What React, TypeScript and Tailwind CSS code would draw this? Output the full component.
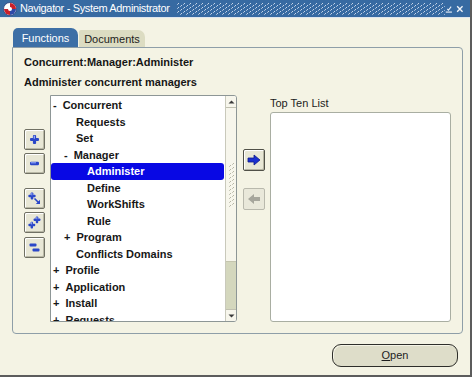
import React from "react";

type Row = { text: string; lvl: number; sign?: "-" | "+"; selected?: boolean };

const rows: Row[] = [
  { text: "Concurrent", lvl: 0, sign: "-" },
  { text: "Requests", lvl: 1 },
  { text: "Set", lvl: 1 },
  { text: "Manager", lvl: 1, sign: "-" },
  { text: "Administer", lvl: 2, selected: true },
  { text: "Define", lvl: 2 },
  { text: "WorkShifts", lvl: 2 },
  { text: "Rule", lvl: 2 },
  { text: "Program", lvl: 1, sign: "+" },
  { text: "Conflicts Domains", lvl: 1 },
  { text: "Profile", lvl: 0, sign: "+" },
  { text: "Application", lvl: 0, sign: "+" },
  { text: "Install", lvl: 0, sign: "+" },
  { text: "Requests", lvl: 0, sign: "+" },
];

const BLUE = "#2b47c8";

function PlusShape({ x, y, s = 1 }: { x: number; y: number; s?: number }) {
  return (
    <g transform={`translate(${x} ${y}) scale(${s})`}>
      <rect x={-1.6} y={-4.5} width={3.2} height={9} rx={1} fill={BLUE} />
      <rect x={-4.5} y={-1.6} width={9} height={3.2} rx={1} fill={BLUE} />
      <rect x={-0.8} y={-3.8} width={1.2} height={3} fill="#9fb4ff" />
    </g>
  );
}
function MinusShape({ x, y }: { x: number; y: number }) {
  return (
    <g transform={`translate(${x} ${y})`}>
      <rect x={-4.5} y={-1.7} width={9} height={3.4} rx={1.2} fill={BLUE} />
      <rect x={-3.5} y={-1.2} width={5} height={1} fill="#9fb4ff" />
    </g>
  );
}

function ToolBtn({ children, className = "" }: { children: React.ReactNode; className?: string }) {
  return (
    <div
      className={`w-[21px] h-[21px] rounded-[2px] border border-[#707064] bg-[#e8e7d6] shadow-[inset_1px_1px_0_#ffffff,inset_-1px_-1px_0_#b9b8a6] flex items-center justify-center ${className}`}
    >
      <svg width="15" height="15" viewBox="0 0 15 15">
        {children}
      </svg>
    </div>
  );
}

function TitlePattern() {
  return (
    <svg width="268" height="12" className="block">
      <defs>
        <pattern id="dots" x="0" y="0" width="6" height="4" patternUnits="userSpaceOnUse">
          <rect x="1" y="0" width="1" height="1" fill="#c9d7ea" />
          <rect x="0" y="1" width="1" height="1" fill="#9db4d3" />
          <rect x="4" y="2" width="1" height="1" fill="#c9d7ea" />
          <rect x="3" y="3" width="1" height="1" fill="#9db4d3" />
        </pattern>
      </defs>
      <rect width="268" height="12" fill="url(#dots)" />
    </svg>
  );
}

export default function App() {
  return (
    <div className="w-[474px] h-[380px] bg-white font-['Liberation_Sans',Arial,sans-serif] overflow-hidden">
      <div className="w-[472px] h-[377px] bg-[#f4f3e4] border-r-2 border-b-2 border-[#5c5c5c] flex flex-col">
        {/* Title bar */}
        <div className="h-[18px] bg-[#376aa2] flex items-center pl-[3px] pr-[6px] border-b border-[#dfe6ee]">
          <svg width="14" height="14" viewBox="0 0 14 14" className="shrink-0">
            <circle cx="7" cy="7" r="6.5" fill="#ffffff" stroke="#2a3f7a" strokeWidth="0.8" />
            <path d="M7 1 A6 6 0 0 1 13 7 L7 7 Z" fill="#c8202a" />
            <path d="M1 7 A6 6 0 0 0 7 13 L7 7 Z" fill="#c8202a" />
            <path d="M7 7 L13 7 A6 6 0 0 1 7 13 Z" fill="#2d49a8" />
            <circle cx="7" cy="7" r="2" fill="#fff" />
          </svg>
          <span className="ml-[3px] text-white text-[11px] tracking-[-0.35px] leading-none whitespace-nowrap">
            Navigator - System Administrator
          </span>
          <div className="ml-[7px]">
            <TitlePattern />
          </div>
          <div className="flex-1" />
          <svg width="10" height="10" viewBox="0 0 10 10" className="mr-[4px]">
            <path d="M1 9 H9" stroke="#e8eef7" strokeWidth="1.5" />
            <path d="M3 5 L4.5 6.5 L8 2" stroke="#e8eef7" strokeWidth="1.4" fill="none" />
          </svg>
          <svg width="10" height="10" viewBox="0 0 10 10">
            <path d="M1.5 1.5 L8.5 8.5 M8.5 1.5 L1.5 8.5" stroke="#f1f4f9" strokeWidth="1.8" />
          </svg>
        </div>

        {/* Body */}
        <div className="flex-1 flex flex-col pl-[12px] pr-[7px] pt-[10px]">
          {/* Tabs */}
          <div className="flex items-end h-[19px] pl-[1px]">
            <div className="h-[19px] w-[65px] bg-[#3d6fa6] rounded-tl-[5px] rounded-tr-[7px] flex items-center justify-center text-white text-[11px] leading-none pt-[1px]">
              Functions
            </div>
            <div className="h-[17px] w-[66px] ml-[1px] bg-[#dcdcc2] rounded-tr-[7px] rounded-tl-[2px] flex items-center justify-center text-[#1c1c1c] text-[11px] leading-none pt-[1px]">
              Documents
            </div>
          </div>

          {/* Panel */}
          <div className="w-[451px] h-[287px] border border-[#8e9ea8] rounded-[4px] rounded-tl-none pl-[11px] pr-[11px] pt-[4px] pb-[11px] flex flex-col">
            <div className="h-[20px] leading-[20px] text-[11px] font-bold text-[#161616]">
              Concurrent:Manager:Administer
            </div>
            <div className="h-[20px] leading-[20px] text-[11px] font-bold text-[#161616]">
              Administer concurrent managers
            </div>

            <div className="mt-[3px] flex h-[227px]">
              {/* Left tool buttons */}
              <div className="w-[21px] flex flex-col pt-[34px]">
                <ToolBtn>
                  <PlusShape x={7.5} y={7.5} />
                </ToolBtn>
                <ToolBtn className="mt-[3px]">
                  <MinusShape x={7.5} y={7.5} />
                </ToolBtn>
                <ToolBtn className="mt-[14px]">
                  <PlusShape x={5} y={5} s={0.8} />
                  <path d="M7.5 7.5 L12 12" stroke={BLUE} strokeWidth="1.6" />
                  <path d="M13 13 L13 8.8 L8.8 13 Z" fill={BLUE} />
                </ToolBtn>
                <ToolBtn className="mt-[3px]">
                  <PlusShape x={4.8} y={10} s={0.75} />
                  <PlusShape x={10} y={4.8} s={0.75} />
                </ToolBtn>
                <ToolBtn className="mt-[4px]">
                  <g transform="translate(6 5)">
                    <rect x={-3.5} y={-1.5} width={7} height={3} rx={1} fill={BLUE} />
                  </g>
                  <g transform="translate(9 10)">
                    <rect x={-3.5} y={-1.5} width={7} height={3} rx={1} fill={BLUE} />
                  </g>
                </ToolBtn>
              </div>

              {/* Tree */}
              <div className="ml-[5px] w-[187px] h-[227px] border border-[#8d9696] rounded-tr-[3px] rounded-br-[3px] bg-white flex overflow-hidden">
                <div className="flex-1 pt-[1px] overflow-hidden">
                  {rows.map((r, i) => (
                    <div
                      key={i}
                      className={`h-[16.5px] flex items-center text-[11px] font-bold whitespace-nowrap mr-[1px] ${
                        r.selected ? "bg-[#0808e4] text-white rounded-[3px]" : "text-[#171717]"
                      }`}
                      style={{ paddingLeft: r.sign ? 2 + 11 * r.lvl : 14 + 11 * r.lvl }}
                    >
                      {r.sign && <span className="mr-[6px]">{r.sign}</span>}
                      <span>{r.text}</span>
                    </div>
                  ))}
                </div>
                {/* Scrollbar */}
                <div className="w-[11px] border-l border-[#c9c9bb] flex flex-col bg-[#f7f6ec]">
                  <div className="h-[12px] flex items-center justify-center border-b border-[#c0c0b0]">
                    <svg width="7" height="4" viewBox="0 0 7 4">
                      <path d="M0.5 3.5 L3.5 0.5 L6.5 3.5 Z" fill="#3b3b3b" />
                    </svg>
                  </div>
                  <div className="h-[154px] flex items-center justify-center border-b border-[#c4c5ae]">
                    <svg width="9" height="44" viewBox="0 0 9 44">
                      {Array.from({ length: 11 }).map((_, k) => (
                        <g key={k}>
                          <rect x="6" y={k * 4} width="1" height="1" fill="#b5b5a4" />
                          <rect x="5" y={k * 4 + 1} width="1" height="1" fill="#c7c7b8" />
                          <rect x="3" y={k * 4 + 2} width="1" height="1" fill="#b5b5a4" />
                          <rect x="2" y={k * 4 + 3} width="1" height="1" fill="#c7c7b8" />
                        </g>
                      ))}
                    </svg>
                  </div>
                  <div className="flex-1 bg-[#d4d7bd]" />
                  <div className="h-[12px] flex items-center justify-center border-t border-[#c0c0b0] bg-[#f7f6ec]">
                    <svg width="7" height="4" viewBox="0 0 7 4">
                      <path d="M0.5 0.5 L3.5 3.5 L6.5 0.5 Z" fill="#3b3b3b" />
                    </svg>
                  </div>
                </div>
              </div>

              {/* Arrow buttons */}
              <div className="ml-[6px] w-[22px] flex flex-col pt-[54px]">
                <div className="w-[22px] h-[22px] rounded-[2px] border border-[#505048] bg-[#e8e7d6] shadow-[inset_1px_1px_0_#ffffff,inset_-1px_-1px_0_#b5b4a2] flex items-center justify-center">
                  <svg width="14" height="12" viewBox="0 0 14 12">
                    <path d="M1 4 H7 V1 L13 6 L7 11 V8 H1 Z" fill="#1a2fd0" stroke="#0c1a8a" strokeWidth="0.8" />
                  </svg>
                </div>
                <div className="mt-[17px] w-[22px] h-[22px] rounded-[2px] border border-[#b9b9ad] bg-[#e9e8da] flex items-center justify-center">
                  <svg width="14" height="12" viewBox="0 0 14 12">
                    <path d="M13 4 H7 V1 L1 6 L7 11 V8 H13 Z" fill="#a6a69c" />
                  </svg>
                </div>
              </div>

              {/* Top ten list */}
              <div className="ml-[5px] w-[181px] flex flex-col">
                <div className="h-[17px] leading-[17px] text-[11px] text-[#1c1c1c]">Top Ten List</div>
                <div className="flex-1 bg-white border border-[#a9aea2] rounded-[3px]" />
              </div>
            </div>
          </div>

          {/* Open button */}
          <div className="flex justify-end mt-[10px] pr-[5px]">
            <div className="w-[126px] h-[23px] rounded-[9px] border-[1.5px] border-[#2e2e2a] bg-[#deddc9] shadow-[inset_1px_1px_0_#f4f3e6] flex items-center justify-center text-[11px] text-[#1e1e1e]">
              <span>
                <span className="underline">O</span>pen
              </span>
            </div>
          </div>
        </div>
      </div>
    </div>
  );
}
